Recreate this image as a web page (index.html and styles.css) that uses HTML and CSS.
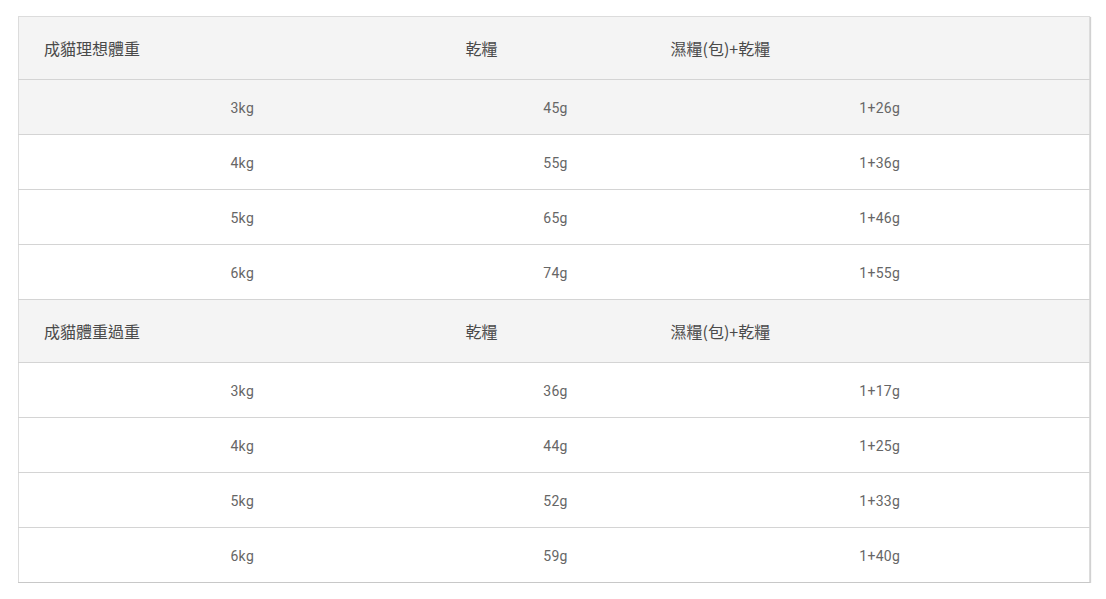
FILE: index.html
```html
<!DOCTYPE html>
<html lang="zh-Hant">
<head>
<meta charset="utf-8">
<link rel="stylesheet" href="styles.css">
</head>
<body>
<div class="page">
  <table class="feed">
    <colgroup>
      <col class="c1"><col class="c2"><col class="c3">
    </colgroup>
    <tbody>
      <tr class="head"><th>成貓理想體重</th><th>乾糧</th><th>濕糧(包)+乾糧</th></tr>
      <tr class="shade"><td>3kg</td><td>45g</td><td>1+26g</td></tr>
      <tr><td>4kg</td><td>55g</td><td>1+36g</td></tr>
      <tr><td>5kg</td><td>65g</td><td>1+46g</td></tr>
      <tr><td>6kg</td><td>74g</td><td>1+55g</td></tr>
      <tr class="head"><th>成貓體重過重</th><th>乾糧</th><th>濕糧(包)+乾糧</th></tr>
      <tr><td>3kg</td><td>36g</td><td>1+17g</td></tr>
      <tr><td>4kg</td><td>44g</td><td>1+25g</td></tr>
      <tr><td>5kg</td><td>52g</td><td>1+33g</td></tr>
      <tr class="last"><td>6kg</td><td>59g</td><td>1+40g</td></tr>
    </tbody>
  </table>
</div>
</body>
</html>
```
FILE: styles.css
```css
html, body {
  margin: 0;
  padding: 0;
  background: #fff;
}
.page {
  padding: 16px 0 0 18px;
}
.feed {
  width: 1071px;
  border-collapse: collapse;
  table-layout: fixed;
  border: 1px solid #dcdcdc;
  box-shadow: 1px 1px 1px rgba(0, 0, 0, 0.18);
  font-family: Roboto, "Liberation Sans", "Noto Sans CJK TC", sans-serif;
}
.c1 { width: 422px; }
.c2 { width: 205px; }
.c3 { width: 444px; }
.feed th,
.feed td {
  padding: 0 0 0 25px;
  border-bottom: 1px solid #d4d4d4;
}
.feed th {
  height: 62px;
  text-align: left;
  font-family: "Noto Sans CJK TC", sans-serif;
  font-weight: 400;
  font-size: 16px;
  color: #4a4a4a;
  background: #f4f4f4;
}
.feed td {
  height: 53px;
  padding-top: 1px;
  text-align: center;
  font-size: 14px;
  font-weight: 400;
  color: #666;
  letter-spacing: 0.3px;
}
.feed tr.shade td {
  background: #f4f4f4;
}
.feed tr.last td {
  border-bottom: 1px solid #c8c8c8;
}
```
